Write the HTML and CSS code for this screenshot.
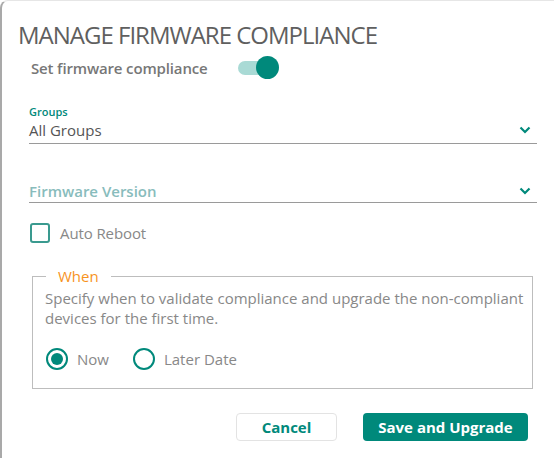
FILE: index.html
```html
<!DOCTYPE html>
<html>
<head>
<meta charset="utf-8">
<link rel="stylesheet" href="styles.css">
</head>
<body>
<div class="dialog">
  <h1 class="title">MANAGE FIRMWARE COMPLIANCE</h1>
  <div class="toggle-row">
    <span class="toggle-label">Set firmware compliance</span>
    <span class="toggle"><span class="track"></span><span class="knob"></span></span>
  </div>
  <div class="field groups">
    <div class="field-label">Groups</div>
    <div class="select">
      <span class="value">All Groups</span>
      <svg class="chev" width="12" height="8" viewBox="0 0 12 8"><path d="M1.5 1.5 L6 6 L10.5 1.5" fill="none" stroke="#00897b" stroke-width="2.2"/></svg>
    </div>
  </div>
  <div class="field fw">
    <div class="select">
      <span class="placeholder">Firmware Version</span>
      <svg class="chev" width="12" height="8" viewBox="0 0 12 8"><path d="M1.5 1.5 L6 6 L10.5 1.5" fill="none" stroke="#00897b" stroke-width="2.2"/></svg>
    </div>
  </div>
  <label class="check-row">
    <span class="checkbox"></span>
    <span class="check-text">Auto Reboot</span>
  </label>
  <fieldset class="when">
    <legend>When</legend>
    <p class="desc">Specify when to validate compliance and upgrade the non&#8209;compliant devices for the first time.</p>
    <div class="radios">
      <span class="radio-item"><span class="radio on"></span><span class="radio-text">Now</span></span>
      <span class="radio-item"><span class="radio"></span><span class="radio-text">Later Date</span></span>
    </div>
  </fieldset>
  <div class="actions">
    <button class="btn cancel">Cancel</button>
    <button class="btn save">Save and Upgrade</button>
  </div>
</div>
</body>
</html>
```
FILE: styles.css
```css
* { box-sizing: border-box; }
html, body { margin: 0; padding: 0; background: #fff; }
body { font-family: "Open Sans", "Noto Sans", sans-serif; width: 554px; height: 458px; overflow: hidden; }
.dialog {
  height: 458px;
  border-left: 2px solid #a9a9a9;
  border-top: 1px solid #e6e6e6;
  border-top-left-radius: 8px;
  padding: 17px 0 0 17px;
}
.title {
  margin: 0 0 0 -1px;
  font-size: 24px;
  font-weight: 400;
  color: #5f5f5f;
  line-height: 34px;
  letter-spacing: -1px;
}
.toggle-row { display: flex; align-items: center; padding-left: 12px; height: 26px; margin-top: 3px; }
.toggle-label { font-size: 15px; font-weight: 600; color: #777; width: 207px; letter-spacing: -0.15px; }
.toggle { position: relative; width: 42px; height: 24px; display: inline-block; }
.track { position: absolute; left: 0; top: 5px; width: 34px; height: 14px; border-radius: 7px; background: #a9dad5; }
.knob { position: absolute; left: 18px; top: 0; width: 23px; height: 23px; border-radius: 50%; background: #00897b; }
.field { margin-right: 17px; margin-left: 10px; }
.groups { margin-top: 24px; }
.field-label { font-size: 11px; font-weight: 600; color: #00897b; line-height: 13px; }
.select { display: flex; align-items: center; justify-content: space-between; border-bottom: 1.5px solid #9a9a9a; padding-right: 6px; }
.groups .select { height: 26px; padding-bottom: 2px; }
.value { font-size: 15px; color: #555; }
.chev { display: block; }
.fw { margin-top: 36px; }
.fw .select { height: 23px; }
.placeholder { font-size: 15px; font-weight: 600; color: #88bcbc; }
.check-row { display: flex; align-items: center; margin: 20px 0 0 11px; }
.checkbox { width: 20px; height: 20px; border: 2px solid #3a9a8f; border-radius: 3px; }
.check-text { margin-left: 10px; font-size: 15px; color: #888; letter-spacing: -0.1px; }
.when {
  margin: 26px 0 0 13px;
  width: 501px;
  height: 120px;
  border: 1px solid #bdbdbd;
  padding: 0 2px 0 12px;
}
.when legend { padding: 0 12px; margin-left: 1px; font-size: 15px; color: #f7931e; line-height: 14px; }
.desc { margin: 5px 0 0 0; font-size: 15px; color: #888; line-height: 20px; }
.radios { display: flex; align-items: center; margin-top: 20px; padding-left: 1px; }
.radio-item { display: flex; align-items: center; margin-right: 24px; }
.radio { width: 22px; height: 22px; border: 2.2px solid #00897b; border-radius: 50%; position: relative; margin-left: 0; }
.radio.on::after { content: ""; position: absolute; left: 3px; top: 3px; width: 12px; height: 12px; border-radius: 50%; background: #00897b; }
.radio-text { margin-left: 9px; font-size: 15px; color: #888; }
.actions { display: flex; margin: 24px 0 0 217px; gap: 26px; }
.btn { font-family: "Open Sans", "Noto Sans", sans-serif; font-weight: 700; font-size: 15px; border-radius: 4px; height: 28px; cursor: pointer; }
.cancel { width: 101px; background: #fff; border: 1px solid #e3e3e3; color: #00897b; }
.save { width: 165px; background: #00897b; border: none; color: #fff; }
```
